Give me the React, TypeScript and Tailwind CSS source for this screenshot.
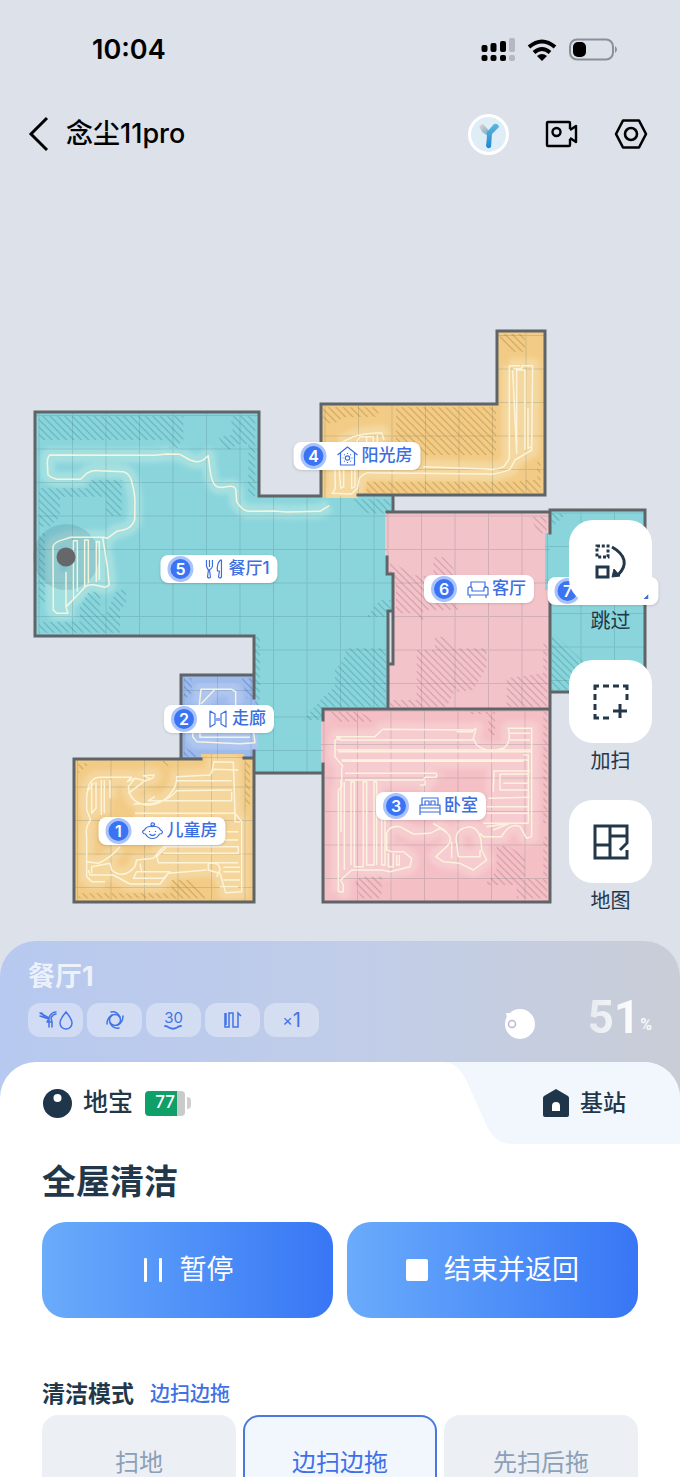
import { useState } from 'react';
import type { ReactNode } from 'react';

type Room = {
  id: string;
  points: string;
  fill: string;
  gridX: number;
  gridY: number;
};

const ROOMS: Room[] = [
  {
    id: 'dining',
    points: '35,412 259,412 259,496 393,496 393,512 387,512 387,574 393,574 393,612 388,612 388,708 323,708 323,773 255,773 255,636 35,636',
    fill: '#8ad5dc',
    gridX: 5,
    gridY: 13,
  },
  { id: 'sun', points: '321,404 497,404 497,331 545,331 545,495 358,495 358,498 321,498', fill: '#f2cb86', gridX: 23, gridY: 0 },
  { id: 'living', points: '385,512 550,512 550,709 388,709 388,612 393,612 393,574 385,574', fill: '#f3c3ca', gridX: 19, gridY: 13 },
  { id: 'kitchen', points: '550,510 645,510 645,692 550,692 550,590 545,590 545,533 550,533', fill: '#8ad5dc', gridX: 11, gridY: 10 },
  { id: 'hall', points: '181,675 254,675 254,698 258,700 258,750 254,751 254,759 181,759', fill: '#9fbbec', gridX: 16, gridY: 20 },
  { id: 'kids', points: '74,759 201,759 201,754 244,754 244,759 254,759 254,902 74,902', fill: '#f2cb86', gridX: 10, gridY: 16 },
  { id: 'bedroom', points: '323,709 550,709 550,902 323,902 323,764 321,764 321,720 323,720', fill: '#f4c0c6', gridX: 22, gridY: 7 },
];

const WALLS = [
  'M321 496H259V412H35V636H254V698',
  'M321 496V404H497V331H545V495H358',
  'M393 496V512M387 512H550V533M550 510H645V692H550',
  'M387 557V574H393V664H388M393 611H388V708',
  'M550 591V902H323V764M323 720V709H550',
  'M254 751V902H74V759H201M244 758H254M181 759V675H254M255 773H323',
];

type Trail = {
  id: string;
  clip: string;
  origin: string;
  halo: string;
  hatch: string;
  hatchAreas: string;
  path: string;
};

// Trails are drawn on a grid three times finer than the map
const TRAILS: Trail[] = [
  {
    id: 'dining-trail',
    clip: 'dining',
    origin: 'translate(20 320) scale(0.3333)',
    halo: '#aee3e2',
    hatch: 'url(#hatch-teal)',
    hatchAreas:
      'M57 288H490V360H57ZM440 360H480V385H450ZM632 288H706V528H685V372H655L620 395L595 350L640 345ZM57 505H205L210 480H305V588H258V530H120V590L90 620H57ZM57 640H75V850H57ZM57 905H180V860L205 815H240V880H260L290 810H318V850L300 870V938H57ZM704 950H720V1170H704Z',
    path:
      'M480 403L440 402L405 406L90 405Q82 410 82 430L84 465Q95 475 110 478L182 478L200 460Q215 450 235 452L310 455Q330 462 335 485Q345 520 345 545L344 600Q335 625 310 630L290 634L262 655L250 652L152 652L120 662Q103 668 99 680L100 870L110 880L144 880L138 862L196 800Q205 792 225 795L255 802L268 795L262 740L248 652M138 755V860L160 838V662H172V815M194 800V660H205V790M229 785V665H238V780M480 403L510 420Q535 430 550 420L565 407L570 450Q575 490 590 500Q605 505 620 500Q650 495 648 515L650 545Q665 570 685 574L760 573L800 576L900 574L928 557',
  },
  {
    id: 'dining-east',
    clip: 'dining',
    origin: 'translate(300 320) scale(0.3333)',
    halo: '#aee3e2',
    hatch: 'url(#hatch-teal)',
    hatchAreas: 'M160 538H272V580H190ZM240 840H272V890H200ZM140 985H258V1160H70V1130L105 1100V1050L130 1020ZM10 1200H70V1130Z',
    path: '',
  },
  {
    id: 'sun-trail',
    clip: 'sun',
    origin: 'translate(300 320) scale(0.3333)',
    halo: '#f6dca8',
    hatch: 'url(#hatch-amber)',
    hatchAreas: 'M70 262H235V290L130 292L105 310H70ZM288 262H588V405H350L288 360ZM600 42H675V95H625L600 60ZM200 485H660V480H722V518H200ZM712 425H722V480H712Z',
    path:
      'M105 450L106 505L97 520L155 522L172 505L178 475Q195 455 215 458L560 462Q590 465 630 448L645 420L695 390L698 137H665V146H640M628 137H660M628 137V415L612 440Q590 452 560 447L370 440M118 450L122 505L131 500V450M155 450V505L165 500V450M638 150L650 400V150H675V390M684 265V385L694 380M120 370L160 350Q190 340 245 338L252 360M165 375L180 350H220V365M200 350V370M232 345V370M108 380V450',
  },
  {
    id: 'living-trail',
    clip: 'living',
    origin: 'translate(300 320) scale(0.3333)',
    halo: '#f7d3d5',
    hatch: 'url(#hatch-rose)',
    hatchAreas:
      'M690 590H740V640H715ZM270 722L340 765L400 770V712H430L460 745L475 870H370V910L350 880H288V780H270ZM350 990H405V950H430L465 985H560V1040L520 1110L470 1115V1100L440 1160H350ZM620 1075L730 1060V970H742V1160H620ZM270 1140H350V1160H270Z',
    path: '',
  },
  {
    id: 'kitchen-trail',
    clip: 'kitchen',
    origin: 'translate(300 320) scale(0.3333)',
    halo: '#aee3e2',
    hatch: 'url(#hatch-teal)',
    hatchAreas: 'M755 580H800L755 625ZM755 935L860 1035V1110H755Z',
    path: '',
  },
  {
    id: 'hall-trail',
    clip: 'hall',
    origin: 'translate(20 640) scale(0.3333)',
    halo: '#b3c9f0',
    hatch: 'url(#hatch-blue)',
    hatchAreas: 'M492 115H515V160L492 180ZM665 115H698V175H680ZM492 320L540 350H492Z',
    path: 'M538 195L543 148H635L647 155V195M543 192L585 148M520 260L518 290L530 305L660 311L705 308L700 270M540 275V292H690',
  },
  {
    id: 'kids-trail',
    clip: 'kids',
    origin: 'translate(20 640) scale(0.3333)',
    halo: '#f5d9a6',
    hatch: 'url(#hatch-amber)',
    hatchAreas: 'M175 370H210L175 400ZM675 363H690V500H675ZM175 760H455V720H510L560 775H175ZM425 363H445V380Z',
    path:
      'M575 398L582 365L640 367L645 520L665 545V755L617 758L600 700L565 690V670Q600 665 600 690L590 710M655 390L580 388L570 405L470 410V422H635M635 450L470 452Q440 490 375 492H340M635 455V482H385L405 470M470 422L465 440Q440 490 390 495Q330 495 325 440L345 415L322 425L335 412H240Q215 412 205 440L200 470V510L212 540M345 415L375 422Q405 415 402 405L370 407L390 416M375 422L325 460M215 430V520L228 505V425M244 420V525M253 420V520M270 420V475M205 450L222 428M212 540Q195 560 200 590V665L235 670Q270 655 300 620M200 665V710L215 725H255M205 690L210 705H280L330 732H420L445 700L560 690M345 520H645V545H660M430 620H655V640H430M430 600H655M655 575H620M440 620L410 650L415 668H655M360 670L365 695H450L430 715H340L350 695H365M610 682H660M610 695H660M610 720H660M600 740H655M215 700V680L270 670L275 690Q310 720 345 680L350 660L400 655L430 620',
  },
  {
    id: 'bedroom-trail',
    clip: 'bedroom',
    origin: 'translate(310 690) scale(0.3333)',
    halo: '#f7d0d3',
    hatch: 'url(#hatch-rose)',
    hatchAreas:
      'M50 65H150L195 95H75ZM535 65H555V135H535ZM700 65H712V400H700ZM560 468H595L645 500V565L712 570V625H620V585H525L560 540ZM135 570L155 560H215V625H150ZM700 440H712V570H700ZM480 65H535V72H480Z',
    path:
      'M85 150L80 140H195L218 118L490 120L498 115L490 145L500 165Q530 190 580 175Q605 160 595 115H665V440L650 445L630 410Q600 395 575 440H520L510 430M75 150V200L100 230M75 150L90 145V150H490M80 180H660V185H85M95 210H655M95 214H640M640 195H655V400M105 250H380M105 270H340L345 262H380M380 262V250M330 285H345V270M600 130H660M600 150H660M550 305L552 243H660M570 252H655M570 252V300H655M580 280H655M535 325L660 322M530 350H655M530 370H655M520 400H655M85 605H100V585L92 570L125 540H215L240 545L300 530L305 505L280 485H245L230 480V430Q240 405 270 410L310 432L360 430L390 415Q440 440 410 470L378 500L400 515L450 520L490 540L530 510L515 480Q515 415 480 410Q430 415 440 460L445 500L510 500V480M85 605V300L95 290V230M93 425V270M103 540V275M123 525V275H133V530H160V275H170V525H192V275H200V525M215 380V525H225V390M235 490V530H250V490M260 495V525H268V495M425 455V505M160 275V525M410 425L370 400M530 410L600 400L550 420M440 125H490',
  },
];

type Pin = { no: number; x: number; y: number; name: string; icon: ReactNode };

const PINS: Pin[] = [
  {
    no: 1,
    x: 162,
    y: 831,
    name: '儿童房',
    icon: (
      <>
        <path d="M3 9C5 4 17 4 19 9C23 11 20 13 18 13C15 19 7 19 4 13C1 13 0 10 3 9ZM11 6C8 4 10 1 12 2C14 3 13 5 11 4" />
        <path d="M8 10V11M14 10V11M8 13C10 15 12 15 14 13" />
      </>
    ),
  },
  {
    no: 2,
    x: 219,
    y: 719,
    name: '走廊',
    icon: <path d="M3 2L8 5V15L3 18ZM19 2L14 5V15L19 18ZM10 9V12M12 9V12" />,
  },
  {
    no: 3,
    x: 431,
    y: 806,
    name: '卧室',
    icon: <path d="M3 10V2H19V10M1 19V9H21V19M1 16H21M1 12H21M6 9V5H10V9M12 9V5H16V9" />,
  },
  {
    no: 4,
    x: 357,
    y: 456,
    name: '阳光房',
    icon: (
      <>
        <path d="M1 9L11 1L21 9M4 7V19H18V7" />
        <circle cx="11" cy="12" r="2.200" />
        <path d="M11 7V8M11 16V17M6 12H7M15 12H16M7.500 8.500L8.200 9.200M14.500 8.500L13.800 9.200M7.500 15.500L8.200 14.800M14.500 15.500L13.800 14.800" />
      </>
    ),
  },
  {
    no: 5,
    x: 219,
    y: 569,
    name: '餐厅1',
    icon: <path d="M3 1V7Q4 10 5 11L4 18Q6 20 7 18L6 11Q9 9 9 7V1M6 1V8M17 1Q13 5 14 12H16L15 18Q16 20 18 18V1Z" />,
  },
  {
    no: 6,
    x: 479,
    y: 589,
    name: '客厅',
    icon: <path d="M4 8V3H18V8M1 9Q3 7 5 9V12H17V9Q19 7 21 9V16H1ZM3 16V19M19 16V19M5 12H17" />,
  },
];

const ACTIONS: { name: string; icon: ReactNode }[] = [
  {
    name: '跳过',
    icon: (
      <>
        <path d="M5 3H16V14H5Z" strokeDasharray="3 1.800" />
        <path d="M5 24H16V34H5Z" />
        <path d="M20 4C34 12 36 22 26 32" />
        <path d="M20 34L22 26L28 33Z" fill="currentColor" strokeWidth="1" />
      </>
    ),
  },
  {
    name: '加扫',
    icon: (
      <>
        <path d="M3 7V3H7M11 3H17M21 3H27M31 3H35V7M35 11V17M3 11V17M3 21V27M3 31V35H7M11 35H17" />
        <path d="M28 21V35M21 28H35" />
      </>
    ),
  },
  { name: '地图', icon: <path d="M35 27V35H3V3H35V20L28 27M18 3V35M3 22H18M18 13H35" /> },
];

const MODES = ['扫地', '边扫边拖', '先扫后拖'];

function StatusBar() {
  return (
    <div className="flex h-[100px] items-center justify-between pr-[62px] pl-[92px] text-black">
      <span className="text-[27px] font-semibold">10:04</span>
      <div className="flex items-center gap-3">
        <svg width="34" height="24" viewBox="0 0 34 24" fill="currentColor" aria-hidden="true">
          <rect x="0.500" y="7" width="6" height="7" rx="2" />
          <rect x="9.500" y="5" width="6" height="9" rx="2" />
          <rect x="19" y="3" width="6" height="11" rx="2" />
          <rect x="0.500" y="17" width="6" height="6" rx="2" />
          <rect x="9.500" y="17" width="6" height="6" rx="2" />
          <rect x="19" y="17" width="6" height="6" rx="2" />
          <g fill="#b3b8c1">
            <rect x="28" y="0" width="6" height="14" rx="2" />
            <rect x="28" y="17" width="6" height="6" rx="2" />
          </g>
        </svg>
        <svg width="30" height="22" viewBox="0 0 30 22" fill="none" stroke="currentColor" strokeWidth="4" aria-hidden="true">
          <path d="M2 8Q15 -3 28 8" />
          <path d="M7 13.500Q15 6.500 23 13.500" />
          <path d="M15 22L10 17Q15 13 20 17Z" fill="currentColor" stroke="none" />
        </svg>
        <svg width="49" height="24" viewBox="0 0 49 24" fill="none" aria-hidden="true">
          <rect x="1" y="1.500" width="43" height="20" rx="7" stroke="#8b9098" strokeWidth="2" />
          <rect x="4" y="4" width="13" height="15" rx="5" fill="#000" />
          <path d="M46 8Q50 11.500 46 15Z" fill="#8b9098" />
        </svg>
      </div>
    </div>
  );
}

function Header() {
  return (
    <header className="flex h-[68px] items-center justify-between pr-8 pl-7 text-black">
      <div className="flex items-center gap-4">
        <button type="button" aria-label="返回">
          <svg width="22" height="36" viewBox="0 0 22 36" fill="none" stroke="currentColor" strokeWidth="3" aria-hidden="true">
            <path d="M19 2L3 18L19 34" />
          </svg>
        </button>
        <h1 className="text-[27px] font-medium">念尘11pro</h1>
      </div>
      <div className="flex items-center gap-9">
        <button type="button" aria-label="助手">
          <svg width="41" height="41" viewBox="0 0 41 41" fill="none" aria-hidden="true">
            <defs>
              <linearGradient id="arm" x1="0" y1="0" x2="1" y2="1">
                <stop offset="0" stopColor="#f3d3cb" />
                <stop offset="1" stopColor="#5aaad2" />
              </linearGradient>
              <linearGradient id="handle" x1="0" y1="0" x2="0" y2="1">
                <stop offset="0" stopColor="#5fb8d8" />
                <stop offset="1" stopColor="#1f86d6" />
              </linearGradient>
            </defs>
            <circle cx="20.500" cy="20.500" r="19" fill="#dfeef6" stroke="#fff" strokeWidth="3" />
            <path d="M11 12L15 10L22 18L20 22L14 18Z" fill="url(#arm)" />
            <path d="M19 18L26 10Q30 9 31 13L24 20L23 33Q20 36 18 32Q19 25 19 18Z" fill="url(#handle)" />
          </svg>
        </button>
        <button type="button" aria-label="视频">
          <svg width="33" height="28" viewBox="0 0 33 28" fill="none" stroke="currentColor" strokeWidth="2.400" strokeLinejoin="round" aria-hidden="true">
            <path d="M25 9V3Q25 2 24 2H3Q2 2 2 3V25Q2 26 3 26H24Q25 26 25 25V19" />
            <path d="M25 10L31 6V22L25 18" />
            <circle cx="11.500" cy="12" r="4" />
          </svg>
        </button>
        <button type="button" aria-label="设置">
          <svg width="34" height="30" viewBox="0 0 34 30" fill="none" stroke="currentColor" strokeWidth="2.600" strokeLinejoin="round" aria-hidden="true">
            <path d="M9 1.500H25L32 15L25 28.500H9L2 15Z" />
            <circle cx="17" cy="15" r="6" />
          </svg>
        </button>
      </div>
    </header>
  );
}

function Hatch({ id, color }: { id: string; color: string }) {
  return (
    <pattern id={id} width="22" height="22" patternUnits="userSpaceOnUse">
      <path d="M0 0L22 22M-5 17L5 27M17 -5L27 5" stroke={color} strokeOpacity="0.75" strokeWidth="3" fill="none" />
    </pattern>
  );
}

function FloorPlan() {
  return (
    <svg className="block w-full" viewBox="0 168 680 773" fill="none" aria-hidden="true">
      <defs>
        <Hatch id="hatch-teal" color="#4fa1ab" />
        <Hatch id="hatch-amber" color="#bd9143" />
        <Hatch id="hatch-rose" color="#c08692" />
        <Hatch id="hatch-blue" color="#5580c6" />
        <filter id="soft">
          <feGaussianBlur stdDeviation="7" />
        </filter>
        {ROOMS.map((room) => (
          <clipPath key={room.id} id={`clip-${room.id}`}>
            <polygon points={room.points} />
          </clipPath>
        ))}
        {ROOMS.map((room) => (
          <pattern key={room.id} id={`grid-${room.id}`} x={room.gridX} y={room.gridY} width="33.5" height="33.5" patternUnits="userSpaceOnUse">
            <path d="M0 0.500H33.500M0.500 0V33.500" stroke="#2c4a55" strokeOpacity="0.17" />
          </pattern>
        ))}
      </defs>

      {ROOMS.map((room) => (
        <polygon key={room.id} points={room.points} fill={room.fill} />
      ))}

      {TRAILS.map((trail) => (
        <g key={trail.id} clipPath={`url(#clip-${trail.clip})`}>
          <g transform={trail.origin}>
            <path d={trail.path} stroke={trail.halo} strokeOpacity="0.75" strokeWidth="44" strokeLinejoin="round" filter="url(#soft)" />
            <path d={trail.hatchAreas} fill={trail.hatch} />
          </g>
        </g>
      ))}

      {ROOMS.map((room) => (
        <polygon key={room.id} points={room.points} fill={`url(#grid-${room.id})`} />
      ))}

      <circle cx="66" cy="557" r="33" fill="#3f7485" fillOpacity="0.2" />

      {TRAILS.map((trail) => (
        <path key={trail.id} d={trail.path} transform={trail.origin} stroke="#fdf7e0" strokeOpacity="0.9" strokeWidth="4.500" strokeLinejoin="round" />
      ))}

      <path d="M388 612H393V664H388Z" fill="#dce1ea" />
      <path d={WALLS.join('')} stroke="#5f6468" strokeWidth="3" strokeLinecap="square" />
      <circle cx="66" cy="557" r="9.500" fill="#65676a" />
    </svg>
  );
}

function PinNumber({ no }: { no: number }) {
  return (
    <span className="flex size-[26px] items-center justify-center rounded-full border-3 border-[#a9c3fa] bg-[#3a74f5] text-base leading-none font-semibold text-white">
      {no}
    </span>
  );
}

function MapArea() {
  return (
    <section className="relative" aria-label="清洁地图">
      <FloorPlan />

      {PINS.map((pin) => (
        <div
          key={pin.no}
          className="absolute flex h-7 -translate-x-1/2 -translate-y-1/2 items-center rounded-lg bg-white pr-2 pl-[7px] whitespace-nowrap text-[#3d6ee0] shadow-sm"
          style={{ left: `${(pin.x / 680) * 100}%`, top: `${((pin.y - 168) / 773) * 100}%` }}
        >
          <PinNumber no={pin.no} />
          <svg className="mr-[3px] ml-[10px]" width="22" height="20" viewBox="0 0 22 20" fill="none" stroke="currentColor" strokeWidth="1.200" strokeLinejoin="round" aria-hidden="true">
            {pin.icon}
          </svg>
          <span className="text-[17px] font-medium">{pin.name}</span>
        </div>
      ))}

      <div
        className="absolute flex h-7 w-[111px] -translate-x-1/2 -translate-y-1/2 items-center justify-between rounded-lg bg-white pr-[10px] pl-[7px] shadow-sm"
        style={{ left: `${(603 / 680) * 100}%`, top: `${((591 - 168) / 773) * 100}%` }}
      >
        <PinNumber no={7} />
        <svg width="5" height="16" viewBox="0 0 5 16" fill="#3d6ee0" aria-hidden="true">
          <path d="M5 11V16H0Z" />
        </svg>
      </div>

      <div className="absolute top-[352px] right-7 flex flex-col gap-[25px]">
        {ACTIONS.map((action) => (
          <button key={action.name} type="button" className="flex flex-col items-center gap-1 text-[#22384a]">
            <span className="flex size-[83px] items-center justify-center rounded-3xl bg-white">
              <svg width="38" height="38" viewBox="0 0 38 38" fill="none" stroke="currentColor" strokeWidth="3" aria-hidden="true">
                {action.icon}
              </svg>
            </span>
            <span className="text-xl leading-7">{action.name}</span>
          </button>
        ))}
      </div>
    </section>
  );
}

function Chip({ children }: { children: ReactNode }) {
  return <li className="flex h-[34px] w-[55px] items-center justify-center rounded-xl bg-white/35 text-[#4273e8]">{children}</li>;
}

function TaskCard() {
  return (
    <section className="flex items-end justify-between rounded-t-[36px] bg-linear-to-r from-[#b7c9f0] via-[#c1cde8] via-55% to-[#cacdd7] pt-[18px] pr-7 pb-[65px] pl-7">
      <div className="flex flex-col gap-2">
        <h2 className="text-[27px] leading-9 font-bold text-white/75">餐厅1</h2>
        <ul className="flex gap-1">
          <Chip>
            <svg width="34" height="20" viewBox="0 0 34 20" fill="none" stroke="currentColor" strokeWidth="1.500" strokeLinecap="round" aria-hidden="true">
              <path d="M1 3L10 8M1 6L10 9M3 3L5 7M10 8Q12 2 17 2M12 8Q14 4 17 4M10 8L8 12M12 8L13 12V17M10 9L10 17M8 12H13" />
              <path d="M27 2Q21 9 21 13A6 6 0 0 0 33 13Q33 9 27 2Z" />
            </svg>
          </Chip>
          <Chip>
            <svg width="20" height="20" viewBox="0 0 20 20" fill="none" stroke="currentColor" strokeWidth="1.500" strokeLinecap="round" aria-hidden="true">
              <circle cx="10" cy="10" r="5.500" />
              <path d="M6 2Q12 1 15 7M18 6Q18 12 13 15M14 18Q8 19 5 13M2 14Q2 8 7 5" />
            </svg>
          </Chip>
          <Chip>
            <span className="flex flex-col items-center">
              <span className="text-[15px] leading-[15px]">30</span>
              <svg width="18" height="5" viewBox="0 0 18 5" fill="none" stroke="currentColor" strokeWidth="1.800" strokeLinecap="round" aria-hidden="true">
                <path d="M1 1Q3 1 5 2.500Q9 5 13 2.500Q15 1 17 1" />
              </svg>
            </span>
          </Chip>
          <Chip>
            <svg width="18" height="18" viewBox="0 0 18 18" fill="none" stroke="currentColor" strokeWidth="1.500" aria-hidden="true">
              <path d="M1 2V16H5V2H9V16H14V2L17 5M2 2V14" />
            </svg>
          </Chip>
          <Chip>
            <span className="text-base">×</span>
            <span className="text-xl">1</span>
          </Chip>
        </ul>
      </div>
      <div className="flex items-end">
        <svg className="mb-[-3px]" width="30" height="32" viewBox="0 0 30 32" aria-hidden="true">
          <circle cx="15" cy="16" r="15" fill="#fff" />
          <path d="M1 5H6L2 10Z" fill="#fff" />
          <circle cx="7" cy="16" r="3.500" fill="#fff" stroke="#b5bccb" strokeWidth="1.500" />
        </svg>
        <p className="flex w-[117px] items-end justify-end font-['Roboto'] font-bold text-white/85">
          <span className="bg-linear-to-r from-white/55 to-white bg-clip-text text-[46px] leading-10 text-transparent">51</span>
          <span className="text-base leading-6">%</span>
        </p>
      </div>
    </section>
  );
}

function DeviceTabs() {
  return (
    <nav className="flex h-[82px] justify-between text-[#22384a]">
      <button type="button" className="flex items-center pl-[43px]">
        <svg width="29" height="29" viewBox="0 0 29 29" aria-hidden="true">
          <circle cx="14.500" cy="14.500" r="14.500" fill="#1f3549" />
          <circle cx="14.500" cy="9" r="4" fill="#fff" />
        </svg>
        <span className="ml-[11px] text-[25px] font-medium">地宝</span>
        <span className="ml-3 flex items-center gap-[2px]">
          <span className="flex h-[25px] w-10 items-center justify-center rounded-sm bg-linear-to-r from-[#0f9f69] from-80% to-[#c8cacc] to-80% text-[17px] font-medium text-white">
            77
          </span>
          <span className="h-3 w-1 rounded-r-sm bg-[#cdcfd1]" />
        </span>
      </button>
      <button type="button" className="relative flex w-[240px] items-center justify-end pr-[54px]">
        <svg className="absolute inset-0" width="240" height="82" viewBox="0 0 240 82" aria-hidden="true">
          <path d="M0 0C14 0 20 6 26 18L46 62C52 76 60 82 74 82H240V0Z" fill="#f2f7fe" />
        </svg>
        <span className="relative flex items-center gap-[11px] text-[23px] font-medium">
          <svg width="26" height="28" viewBox="0 0 26 28" aria-hidden="true">
            <path d="M13 0L25 7Q26 8 26 9V26Q26 28 24 28H2Q0 28 0 26V9Q0 8 1 7Z" fill="#1f3549" />
            <path d="M9 22V17A4 4 0 0 1 17 17V22Z" fill="#fff" />
          </svg>
          基站
        </span>
      </button>
    </nav>
  );
}

export default function App() {
  const [mode, setMode] = useState<string>('边扫边拖');

  return (
    <main className="flex min-h-screen flex-col bg-[#dce1ea] font-['Inter','Noto_Sans_CJK_SC',sans-serif]">
      <StatusBar />
      <Header />
      <MapArea />
      <TaskCard />

      <section className="relative -mt-10 grow overflow-hidden rounded-t-[36px] bg-white">
        <DeviceTabs />
        <div className="px-[42px]">
          <h2 className="mt-3 text-[34px] leading-[52px] font-bold text-[#22384a]">全屋清洁</h2>
          <div className="mt-[14px] grid grid-cols-2 gap-[14px] text-[27px] text-white">
            <button type="button" className="flex h-24 items-center justify-center gap-4 rounded-3xl bg-linear-to-r from-[#6aabfb] to-[#3876f5]">
              <svg width="22" height="24" viewBox="0 0 22 24" fill="currentColor" aria-hidden="true">
                <rect x="2" y="0" width="3" height="24" rx="1" />
                <rect x="17" y="0" width="3" height="24" rx="1" />
              </svg>
              暂停
            </button>
            <button type="button" className="flex h-24 items-center justify-center gap-4 rounded-3xl bg-linear-to-r from-[#6aabfb] to-[#3876f5]">
              <span className="size-[22px] rounded-xs bg-white" />
              结束并返回
            </button>
          </div>

          <fieldset className="mt-[58px]">
            <legend className="flex items-center gap-4 text-[23px] leading-9 font-bold text-[#22384a]">
              清洁模式
              <span className="text-xl leading-9 font-medium text-[#3f70e6]">{mode}</span>
            </legend>
            <div className="mt-[3px] grid grid-cols-3 gap-[7px]">
              {MODES.map((name) => (
                <label
                  key={name}
                  className="flex h-24 items-center justify-center rounded-2xl border-2 border-[#eceff4] bg-[#eceff4] text-2xl text-[#8ba0b8] has-checked:border-[#4a78dd] has-checked:bg-[#f2f7fe] has-checked:text-[#3f70e6]"
                >
                  <input type="radio" name="mode" className="sr-only" checked={mode === name} onChange={() => setMode(name)} />
                  {name}
                </label>
              ))}
            </div>
          </fieldset>
        </div>
      </section>
    </main>
  );
}
